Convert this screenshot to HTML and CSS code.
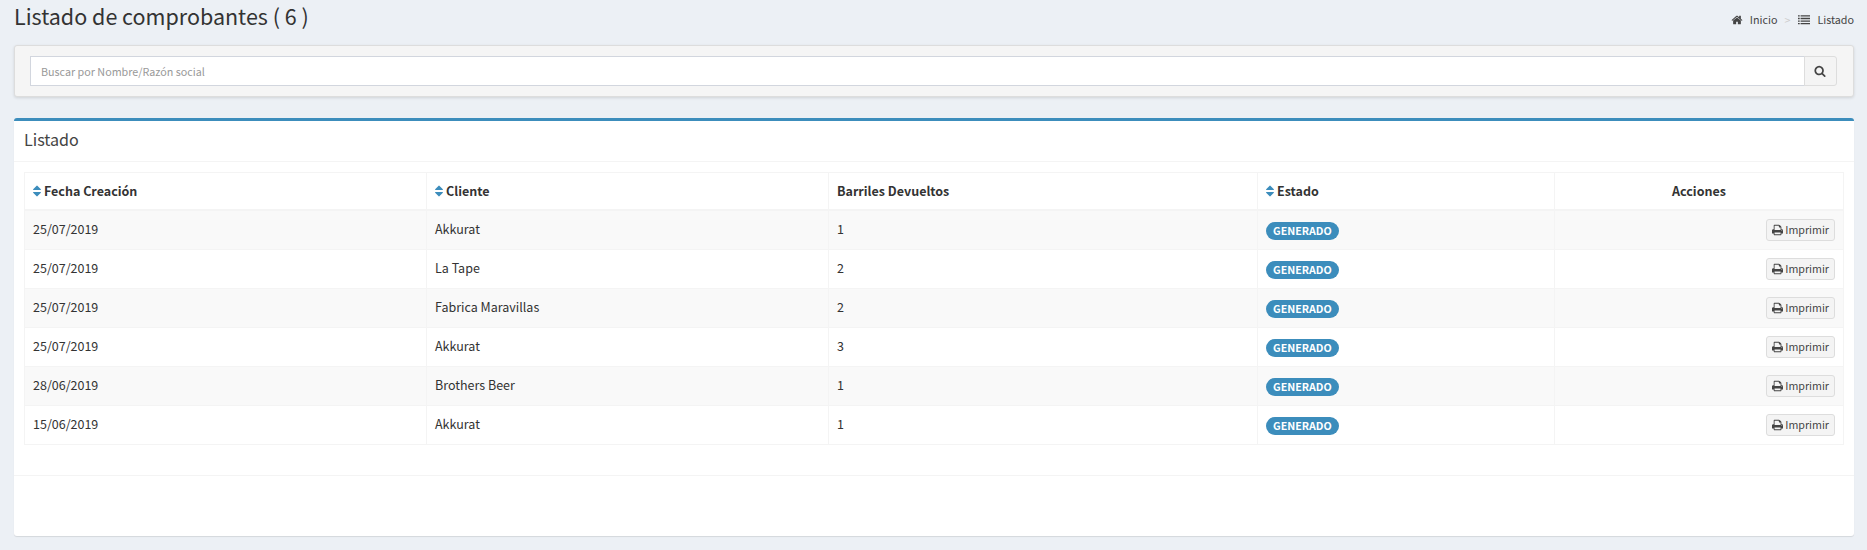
FILE: index.html
```html
<!DOCTYPE html>
<html lang="es">
<head>
<meta charset="utf-8">
<title>Listado de comprobantes</title>
<link rel="stylesheet" href="styles.css">
</head>
<body>
<svg class="sprite" aria-hidden="true">
  <symbol id="home" viewBox="0 0 1792 1792"><path d="M1472 992v480q0 26-19 45t-45 19h-384v-384h-256v384h-384q-26 0-45-19t-19-45v-480q0-1 .5-3t.5-3l575-474 575 474q1 2 1 6zm223-69l-62 74q-8 9-21 11h-3q-13 0-21-7l-692-577-692 577q-12 8-24 7-13-2-21-11l-62-74q-8-10-7-23.5t11-21.5l719-599q32-26 76-26t76 26l244 204v-195q0-14 9-23t23-9h192q14 0 23 9t9 23v408l219 182q10 8 11 21.5t-7 23.5z"/></symbol>
  <symbol id="list" viewBox="0 0 1792 1792"><path d="M0 1344h256v192h-256zM0 960h256v192h-256zM0 576h256v192h-256zM384 1344h1408v192h-1408zM0 192h256v192h-256zM384 960h1408v192h-1408zM384 576h1408v192h-1408zM384 192h1408v192h-1408z"/></symbol>
  <symbol id="search" viewBox="0 0 1792 1792"><path d="M1216 832q0-185-131.5-316.5t-316.5-131.5-316.5 131.5-131.5 316.5 131.5 316.5 316.5 131.5 316.5-131.5 131.5-316.5zm512 832q0 52-38 90t-90 38q-54 0-90-38l-343-342q-179 124-399 124-143 0-273.5-55.5t-225-150-150-225-55.5-273.5 55.5-273.5 150-225 225-150 273.5-55.5 273.5 55.5 225 150 150 225 55.5 273.5q0 220-124 399l343 343q37 37 37 90z"/></symbol>
  <symbol id="sort" viewBox="384 0 1024 1792"><path d="M1408 1088q0 26-19 45l-448 448q-19 19-45 19t-45-19l-448-448q-19-19-19-45t19-45 45-19h896q26 0 45 19t19 45zm0-384q0 26-19 45t-45 19h-896q-26 0-45-19t-19-45 19-45l448-448q19-19 45-19t45 19l448 448q19 19 19 45z"/></symbol>
  <symbol id="print" viewBox="64 0 1664 1792"><path d="M448 1536h896v-256h-896v256zm0-640h896v-384h-160q-40 0-68-28t-28-68v-160h-640v640zm1152 64q0-26-19-45t-45-19-45 19-19 45 19 45 45 19 45-19 19-45zm128 0v416q0 13-9.5 22.5t-22.5 9.5h-224v160q0 40-28 68t-68 28h-960q-40 0-68-28t-28-68v-160h-224q-13 0-22.5-9.5t-9.5-22.5v-416q0-79 56.5-135.5t135.5-56.5h64v-544q0-40 28-68t68-28h672q40 0 88 20t76 48l152 152q28 28 48 76t20 88v256h64q79 0 135.5 56.5t56.5 135.5z"/></symbol>
</svg>
<header class="page-header">
  <h1 class="page-title">Listado de comprobantes ( 6 )</h1>
  <nav class="breadcrumb">
    <a class="crumb"><svg class="icon-crumb"><use href="#home"/></svg>Inicio</a>
    <span class="separator">&gt;</span>
    <a class="crumb"><svg class="icon-crumb"><use href="#list"/></svg>Listado</a>
  </nav>
</header>
<form class="search-panel">
  <input class="search-input" type="text" placeholder="Buscar por Nombre/Razón social">
  <button class="search-button" type="button" aria-label="Buscar"><svg class="icon-search"><use href="#search"/></svg></button>
</form>
<section class="box">
  <div class="box-header"><h2 class="box-title">Listado</h2></div>
  <div class="box-body">
    <table class="table">
      <colgroup><col class="col-date"><col class="col-client"><col class="col-barrels"><col class="col-state"><col class="col-actions"></colgroup>
      <thead>
        <tr>
          <th><span class="sortable"><svg class="icon-sort"><use href="#sort"/></svg>Fecha Creación</span></th>
          <th><span class="sortable"><svg class="icon-sort"><use href="#sort"/></svg>Cliente</span></th>
          <th>Barriles Devueltos</th>
          <th><span class="sortable"><svg class="icon-sort"><use href="#sort"/></svg>Estado</span></th>
          <th class="center">Acciones</th>
        </tr>
      </thead>
      <tbody>
        <tr><td>25/07/2019</td><td>Akkurat</td><td>1</td><td><div class="state"><span class="badge">GENERADO</span></div></td><td><div class="actions"><button class="print-button" type="button"><svg class="icon-print"><use href="#print"/></svg>Imprimir</button></div></td></tr>
        <tr><td>25/07/2019</td><td>La Tape</td><td>2</td><td><div class="state"><span class="badge">GENERADO</span></div></td><td><div class="actions"><button class="print-button" type="button"><svg class="icon-print"><use href="#print"/></svg>Imprimir</button></div></td></tr>
        <tr><td>25/07/2019</td><td>Fabrica Maravillas</td><td>2</td><td><div class="state"><span class="badge">GENERADO</span></div></td><td><div class="actions"><button class="print-button" type="button"><svg class="icon-print"><use href="#print"/></svg>Imprimir</button></div></td></tr>
        <tr><td>25/07/2019</td><td>Akkurat</td><td>3</td><td><div class="state"><span class="badge">GENERADO</span></div></td><td><div class="actions"><button class="print-button" type="button"><svg class="icon-print"><use href="#print"/></svg>Imprimir</button></div></td></tr>
        <tr><td>28/06/2019</td><td>Brothers Beer</td><td>1</td><td><div class="state"><span class="badge">GENERADO</span></div></td><td><div class="actions"><button class="print-button" type="button"><svg class="icon-print"><use href="#print"/></svg>Imprimir</button></div></td></tr>
        <tr><td>15/06/2019</td><td>Akkurat</td><td>1</td><td><div class="state"><span class="badge">GENERADO</span></div></td><td><div class="actions"><button class="print-button" type="button"><svg class="icon-print"><use href="#print"/></svg>Imprimir</button></div></td></tr>
      </tbody>
    </table>
  </div>
  <div class="box-footer"></div>
</section>
</body>
</html>
```
FILE: styles.css
```css
* { box-sizing: border-box; }
body {
  margin: 0;
  padding: 0 13px 0 14px;
  height: 550px;
  overflow: hidden;
  background: #ecf0f5;
  color: #333;
  font-family: "Source Sans Pro", "Noto Sans CJK SC", sans-serif;
  font-size: 12.5px;
  line-height: 20px;
}
svg { fill: currentColor; flex: none; }
button, input { font-family: inherit; }
.sprite { display: none; }

.page-header {
  display: flex;
  justify-content: space-between;
  height: 45px;
}
.page-title {
  margin: 4px 0 0;
  font-size: 21.5px;
  font-weight: 400;
  line-height: 24px;
}
.breadcrumb {
  display: flex;
  height: 18px;
  margin-top: 11px;
  font-size: 10.75px;
  line-height: 18px;
  color: #444;
}
.crumb { display: flex; align-items: center; }
.icon-crumb { width: 12px; height: 12px; margin-right: 7px; }
.separator { padding: 0 8px 0 7px; color: #ccc; }

.search-panel {
  display: flex;
  height: 52px;
  margin: 0 0 21px;
  padding: 10px 16px 10px 15px;
  background: #f5f5f5;
  border: 1px solid #ddd;
  border-radius: 3px;
  box-shadow: 0 1px 3px rgba(0, 0, 0, .12);
}
.search-input {
  flex: 1;
  height: 30px;
  padding: 5px 10px;
  border: 1px solid #d2d6de;
  border-radius: 0;
  background: #fff;
  font-size: 10.75px;
  line-height: 18px;
}
.search-input::placeholder { color: #999; }
.search-button {
  display: flex;
  align-items: center;
  justify-content: center;
  width: 33px;
  height: 30px;
  margin-left: -1px;
  padding: 0 1px 0 0;
  border: 1px solid #ddd;
  border-radius: 0 3px 3px 0;
  background: #f4f4f4;
  color: #444;
}
.icon-search { width: 12px; height: 12px; }

.box {
  height: 418px;
  background: #fff;
  border-top: 3px solid #3c8dbc;
  border-radius: 3px;
  box-shadow: 0 1px 1px rgba(0, 0, 0, .1);
}
.box-header {
  height: 41px;
  padding: 9px 10px;
  border-bottom: 1px solid #f4f4f4;
}
.box-title {
  margin: 0;
  font-size: 16.1px;
  font-weight: 400;
  line-height: 18px;
  color: #444;
}
.box-body { height: 313px; padding: 10px 10px 0; }
.box-footer { border-top: 1px solid #f4f4f4; }

.table {
  width: 1819px;
  table-layout: fixed;
  border-collapse: collapse;
}
.col-date, .col-client { width: 402px; }
.col-barrels { width: 429px; }
.col-state { width: 297px; }
.col-actions { width: 289px; }
.table th, .table td {
  height: 39px;
  padding: 0 8px;
  border: 1px solid #f4f4f4;
  text-align: left;
}
.table td { padding-bottom: 2px; }
.table th { height: 37.5px; border-bottom-width: 2px; font-weight: 700; }
.table tbody tr:first-child td { height: 39.5px; }
.table th.center { text-align: center; }
.table tbody tr:nth-child(odd) { background: #f9f9f9; }
.sortable { display: flex; align-items: center; }
.icon-sort { width: 8px; height: 14px; margin-right: 3px; color: #3c8dbc; }
.state { display: flex; padding-top: 4px; }
.badge {
  height: 18px;
  padding: 0 7px;
  border-radius: 10px;
  background: #3c8dbc;
  color: #fff;
  font-size: 10.7px;
  font-weight: 700;
  line-height: 18px;
}
.actions { display: flex; justify-content: flex-end; padding-top: 2px; }
.print-button {
  display: flex;
  align-items: center;
  height: 22px;
  padding: 0 5px;
  border: 1px solid #ddd;
  border-radius: 3px;
  background: #f4f4f4;
  color: #444;
  font-size: 10.7px;
  line-height: 18px;
}
.icon-print { width: 11.14px; height: 12px; margin-right: 2px; }
```
